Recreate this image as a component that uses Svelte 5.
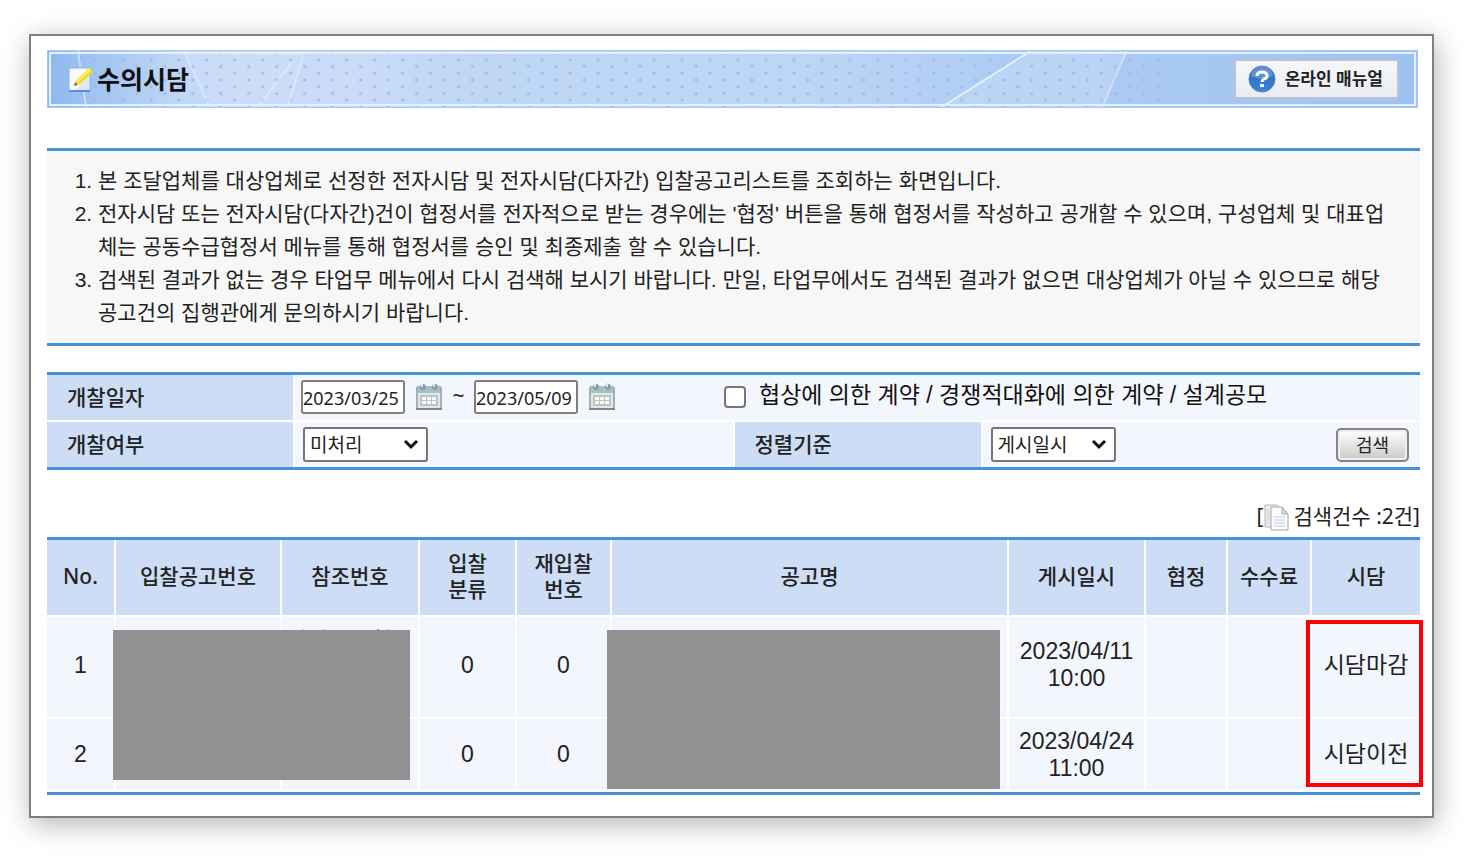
<script lang="ts">
	interface Bid {
		no: number;
		refNo: string;
		category: string;
		rebid: string;
		date: string;
		time: string;
		status: string;
	}

	const notices = [
		'본 조달업체를 대상업체로 선정한 전자시담 및 전자시담(다자간) 입찰공고리스트를 조회하는 화면입니다.',
		"전자시담 또는 전자시담(다자간)건이 협정서를 전자적으로 받는 경우에는 '협정' 버튼을 통해 협정서를 작성하고 공개할 수 있으며, 구성업체 및 대표업체는 공동수급협정서 메뉴를 통해 협정서를 승인 및 최종제출 할 수 있습니다.",
		'검색된 결과가 없는 경우 타업무 메뉴에서 다시 검색해 보시기 바랍니다. 만일, 타업무에서도 검색된 결과가 없으면 대상업체가 아닐 수 있으므로 해당 공고건의 집행관에게 문의하시기 바랍니다.',
	];

	const bids: Bid[] = [
		{ no: 1, refNo: '전자시담협', category: '0', rebid: '0', date: '2023/04/11', time: '10:00', status: '시담마감' },
		{ no: 2, refNo: '', category: '0', rebid: '0', date: '2023/04/24', time: '11:00', status: '시담이전' },
	];

	let dateFrom = $state('2023/03/25');
	let dateTo = $state('2023/05/09');
	let negotiated = $state(false);
	let opened = $state('미처리');
	let sortBy = $state('게시일시');
</script>

{#snippet calendar()}
	<svg width="28" height="30" viewBox="0 0 28 30" aria-hidden="true">
		<path d="M2 4h24v22H2z" fill="#e4e6e6" />
		<path d="M2 4h24v7H2z" fill="#a3c1c8" />
		<path d="M2 5v21M26 5v21" stroke="#a3b1b6" stroke-width="2" />
		<path d="M1 27h26" stroke="#7b8a90" stroke-width="2" />
		<path d="M5 13h18v11H5z" fill="#bfc2c2" />
		<path d="M7 15h4v3H7zM12 15h4v3h-4zM17 15h4v3h-4zM7 19h4v3H7zM12 19h4v3h-4zM17 19h4v3h-4z" fill="#fafafa" />
		<circle cx="8" cy="5" r="3" fill="#8e999d" />
		<circle cx="20" cy="5" r="3" fill="#8e999d" />
		<path d="M7 1v4M19 1v4" stroke="#dfe5e6" stroke-width="2" />
	</svg>
{/snippet}

{#snippet chevron()}
	<svg class="chevron" width="16" height="10" viewBox="0 0 16 10" aria-hidden="true">
		<path d="M2 1l6 6 6-6" fill="none" stroke="#111" stroke-width="3" />
	</svg>
{/snippet}

<main class="window">
	<header class="title-bar">
		<svg class="title-art" viewBox="0 0 1371 58" preserveAspectRatio="none" aria-hidden="true">
			<defs>
				<pattern id="dots" x="5" y="2" width="28" height="14" patternUnits="userSpaceOnUse">
					<g fill="#94bcef">
						<circle cx="14" cy="7" r="1.6" />
						<circle cx="28" cy="14" r="1.6" />
						<circle cx="0" cy="0" r="1.6" />
						<circle cx="28" cy="0" r="1.6" />
						<circle cx="0" cy="14" r="1.6" />
					</g>
				</pattern>
				<linearGradient id="right-shade">
					<stop offset="0" stop-color="#a5c6f2" stop-opacity="0" />
					<stop offset="1" stop-color="#a0c3f1" />
				</linearGradient>
			</defs>
			<path d="M760 0h224l-89 58H760z" fill="url(#right-shade)" opacity=".6" />
			<path d="M1080 0h291v58h-315z" fill="#a0c4f2" opacity=".5" />
			<path d="M136 0h121l-17 58h-78z" fill="#d2e0f8" opacity=".4" />
			<rect width="1120" height="58" fill="url(#dots)" />
			<g stroke="#e6effc" stroke-width="2" fill="none">
				<path d="M984 0l-89 58" />
				<path d="M30 0l8 58M136 0l26 58M257 0l-17 58M244 12l-34 46M1080 0l-24 58" opacity=".6" />
			</g>
		</svg>
		<h1>
			<svg width="27" height="28" viewBox="0 0 27 28" aria-hidden="true">
				<path d="M2 3h21v23H2z" fill="#f8fafe" stroke="#86b1ed" />
				<path d="M2 26h21" stroke="#4f8df0" stroke-width="2" />
				<path d="M22 9v16H9z" fill="#dfe8f7" />
				<path d="M7 21l2-6L22 3l4 4-13 12z" fill="#f7d921" />
				<path d="M9 15L22 3l2 2-13 12z" fill="#fdec62" />
				<path d="M7 21l1-4 3 3z" fill="#8c7650" />
			</svg>
			수의시담
		</h1>
		<button type="button" class="manual">
			<svg width="30" height="30" viewBox="0 0 30 30" aria-hidden="true">
				<defs>
					<linearGradient id="ball" x2="0" y2="1">
						<stop offset="0" stop-color="#2f62b4" />
						<stop offset="1" stop-color="#3b86dc" />
					</linearGradient>
				</defs>
				<circle cx="15" cy="15" r="13" fill="url(#ball)" stroke="#4f83c6" />
				<path d="M4 12a11 10 0 0 1 22 0q-11 5-22 0z" fill="#7fa9e3" opacity=".6" />
				<path d="M10 12q0-4 5-4t5 4q0 2-3 3-2 1-2 3" fill="none" stroke="#fff" stroke-width="3" />
				<path d="M13 20h4v3h-4z" fill="#fff" />
			</svg>
			<span>온라인 매뉴얼</span>
		</button>
	</header>

	<section class="notice">
		<ol>
			{#each notices as notice}
				<li>{notice}</li>
			{/each}
		</ol>
	</section>

	<form class="search" onsubmit={(e) => e.preventDefault()}>
		<label class="name" for="date-from">개찰일자</label>
		<div class="field wide">
			<div class="dates">
				<input class="date" id="date-from" type="text" bind:value={dateFrom} />
				<button type="button" class="pick" aria-label="시작일 선택">{@render calendar()}</button>
				<span class="tilde">~</span>
				<input class="date" type="text" aria-label="종료일" bind:value={dateTo} />
				<button type="button" class="pick" aria-label="종료일 선택">{@render calendar()}</button>
			</div>
			<div class="check">
				<input type="checkbox" id="negotiated" bind:checked={negotiated} />
				<label for="negotiated">협상에 의한 계약 / 경쟁적대화에 의한 계약 / 설계공모</label>
			</div>
		</div>
		<label class="name" for="opened">개찰여부</label>
		<div class="field">
			<div class="select">
				<select id="opened" bind:value={opened}>
					<option>미처리</option>
				</select>
				{@render chevron()}
			</div>
		</div>
		<label class="name" for="sort-by">정렬기준</label>
		<div class="field">
			<div class="select">
				<select id="sort-by" bind:value={sortBy}>
					<option>게시일시</option>
				</select>
				{@render chevron()}
			</div>
			<button type="submit" class="submit">검색</button>
		</div>
	</form>

	<p class="count">
		[<svg width="26" height="28" viewBox="0 0 26 28" aria-hidden="true">
			<path d="M2 2h12l4 4v18H2z" fill="#f2f2f2" stroke="#b4b4b4" />
			<path d="M4 6v16M6 6v16" stroke="#d2d2d2" />
			<path d="M8 4h11l6 7v16H8z" fill="#fdfdfd" stroke="#a5a5a5" />
			<path d="M19 4v7h6z" fill="#ddd" stroke="#a5a5a5" />
			<path d="M11 14h11M11 17h11M11 20h11M11 23h11" stroke="#b3c8e4" />
		</svg>
		<span>검색건수 :{bids.length}건]</span>
	</p>

	<div class="results">
		<table>
			<colgroup>
				<col class="c-no" />
				<col class="c-bid" />
				<col class="c-ref" />
				<col class="c-type" />
				<col class="c-rebid" />
				<col />
				<col class="c-date" />
				<col class="c-deal" />
				<col class="c-fee" />
				<col class="c-status" />
			</colgroup>
			<thead>
				<tr>
					<th>No.</th>
					<th>입찰공고번호</th>
					<th>참조번호</th>
					<th>입찰<br />분류</th>
					<th>재입찰<br />번호</th>
					<th>공고명</th>
					<th>게시일시</th>
					<th>협정</th>
					<th>수수료</th>
					<th>시담</th>
				</tr>
			</thead>
			<tbody>
				{#each bids as bid}
					<tr>
						<td>{bid.no}</td>
						<td></td>
						<td class="ref">{bid.refNo}</td>
						<td>{bid.category}</td>
						<td>{bid.rebid}</td>
						<td></td>
						<td>{bid.date}<br />{bid.time}</td>
						<td></td>
						<td></td>
						<td>{bid.status}</td>
					</tr>
				{/each}
			</tbody>
		</table>
		<div class="mask mask-number"></div>
		<div class="mask mask-name"></div>
		<div class="highlight"></div>
	</div>
</main>

<style>
	:global(body) {
		background: #fff;
	}

	.window {
		--line: #4592d6;
		--head: #ccddf5;
		--cell: #f3f7fd;
		--wide-font: "Liberation Sans", "Noto Sans CJK KR", sans-serif;
		box-sizing: border-box;
		margin: 34px 35px 43px 29px;
		padding: 14px 12px 21px 16px;
		border: 2px solid #808080;
		background: #fff;
		box-shadow: 2px 6px 26px rgba(0, 0, 0, 0.3);
		color: #222;
		font-family: "Noto Sans", "Noto Sans CJK KR", sans-serif;
		font-size: 21px;
	}

	button,
	input,
	select {
		box-sizing: border-box;
		font-family: inherit;
		color: inherit;
	}

	svg {
		display: block;
		flex: none;
	}

	.title-bar {
		position: relative;
		display: flex;
		align-items: center;
		justify-content: space-between;
		box-sizing: border-box;
		height: 58px;
		margin-right: 2px;
		padding: 0 18px 0 19px;
		border: 1px solid #a5c8f5;
		background: linear-gradient(90deg, #8fb9ee 0, #c3d8f6 10%, #cbdcf7 22%, #bfd6f5 32%, #bcd5f5 75%, #a7c8f3 88%, #9cc1f2 100%);
	}

	.title-bar::after {
		content: '';
		position: absolute;
		inset: 1px;
		border: 2px solid #e5effc;
		pointer-events: none;
	}

	.title-art {
		position: absolute;
		inset: 0;
		width: 100%;
		height: 100%;
	}

	h1 {
		position: relative;
		display: flex;
		align-items: center;
		gap: 3px;
		margin: 0;
		color: #111;
		font-size: 25px;
		font-weight: 700;
		line-height: 36px;
	}

	.manual {
		position: relative;
		display: flex;
		align-items: center;
		gap: 8px;
		height: 40px;
		padding: 0 14px 0 11px;
		border: 2px solid #bcc3d0;
		border-radius: 2px;
		background: linear-gradient(#f6f7fa, #eaecf2);
		font-size: 17px;
		font-weight: 700;
	}

	.manual span {
		padding-bottom: 3px;
	}

	.notice {
		margin-top: 40px;
		padding: 13px 26px 14px 0;
		border: solid var(--line);
		border-width: 3px 0;
		background: #f7f7f7;
	}

	.notice ol {
		margin: 0;
		padding-left: 51px;
		font-family: var(--wide-font);
		line-height: 33px;
	}

	.search {
		display: grid;
		grid-template-columns: 246px 1fr 246px 1fr;
		gap: 2px;
		margin-top: 26px;
		border: solid var(--line);
		border-width: 3px 0;
	}

	.name {
		display: flex;
		align-items: center;
		padding: 0 0 4px 20px;
		background: var(--head);
		font-weight: 500;
	}

	.field {
		display: flex;
		align-items: center;
		justify-content: space-between;
		box-sizing: border-box;
		height: 45px;
		padding: 0 11px 0 8px;
		background: var(--cell);
	}

	.field.wide {
		grid-column: span 3;
		justify-content: flex-start;
		gap: 108px;
		padding: 0 0 2px 6px;
	}

	.dates {
		display: flex;
		align-items: center;
	}

	.date {
		width: 104px;
		height: 34px;
		padding: 2px 0 0 0;
		border: 2px solid #808080;
		border-radius: 3px;
		background: #fff;
		font-size: 18px;
	}

	.pick {
		margin-left: 10px;
		padding: 0;
		border: 0;
		background: none;
	}

	.tilde {
		width: 31px;
		padding-bottom: 4px;
		text-align: center;
	}

	.check {
		display: flex;
		align-items: center;
		gap: 13px;
		color: #111;
		font-family: var(--wide-font);
		font-size: 23px;
		line-height: 30px;
	}

	.check label {
		padding-bottom: 4px;
	}

	.check input {
		appearance: none;
		width: 22px;
		height: 22px;
		margin: 0;
		border: 2px solid #767676;
		border-radius: 4px;
		background: #fff;
	}

	.check input:checked {
		background: var(--line);
	}

	.select {
		position: relative;
	}

	select {
		appearance: none;
		width: 125px;
		height: 35px;
		padding: 0 30px 0 5px;
		border: 2px solid #767676;
		border-radius: 3px;
		background: #fff;
		font-size: 19px;
	}

	.chevron {
		position: absolute;
		top: 13px;
		right: 9px;
		pointer-events: none;
	}

	.submit {
		width: 73px;
		height: 34px;
		padding: 0 0 2px;
		border: 2px solid #858585;
		border-radius: 5px;
		background: linear-gradient(#fff, #c9c9c9);
		box-shadow: inset 0 0 0 2px #eee;
		font-size: 18px;
	}

	.count {
		display: flex;
		align-items: center;
		justify-content: flex-end;
		margin: 30px 0 4px;
		line-height: 33px;
	}

	.count svg {
		margin-right: 4px;
	}

	.results {
		position: relative;
		border: solid var(--line);
		border-width: 3px 0;
	}

	table {
		width: 100%;
		table-layout: fixed;
		border-collapse: collapse;
	}

	th,
	td {
		padding: 0 0 4px;
		border: solid #fff;
		border-width: 0 0 2px 2px;
		text-align: center;
	}

	th:first-child,
	td:first-child {
		border-left: 0;
	}

	th {
		height: 71px;
		background: var(--head);
		font-weight: 500;
		line-height: 26px;
	}

	td {
		height: 96px;
		background: var(--cell);
		font-family: var(--wide-font);
		font-size: 23px;
		line-height: 27px;
	}

	tbody tr:last-child td {
		height: 71px;
		padding: 0;
	}

	td.ref {
		padding: 11px 0 0 4px;
		box-sizing: border-box;
		text-align: left;
		vertical-align: top;
	}

	.c-no { width: 68px; }
	.c-bid { width: 166px; }
	.c-ref { width: 138px; }
	.c-type { width: 97px; }
	.c-rebid { width: 95px; }
	.c-date { width: 137px; }
	.c-deal { width: 82px; }
	.c-fee { width: 84px; }
	.c-status { width: 109px; }

	.mask {
		position: absolute;
		top: 90px;
		background: #919191;
	}

	.mask-number {
		left: 66px;
		width: 297px;
		height: 150px;
	}

	.mask-name {
		left: 560px;
		right: 420px;
		height: 159px;
	}

	.highlight {
		position: absolute;
		top: 80px;
		right: -3px;
		box-sizing: border-box;
		width: 117px;
		height: 167px;
		border: 4px solid #f00;
	}
</style>
